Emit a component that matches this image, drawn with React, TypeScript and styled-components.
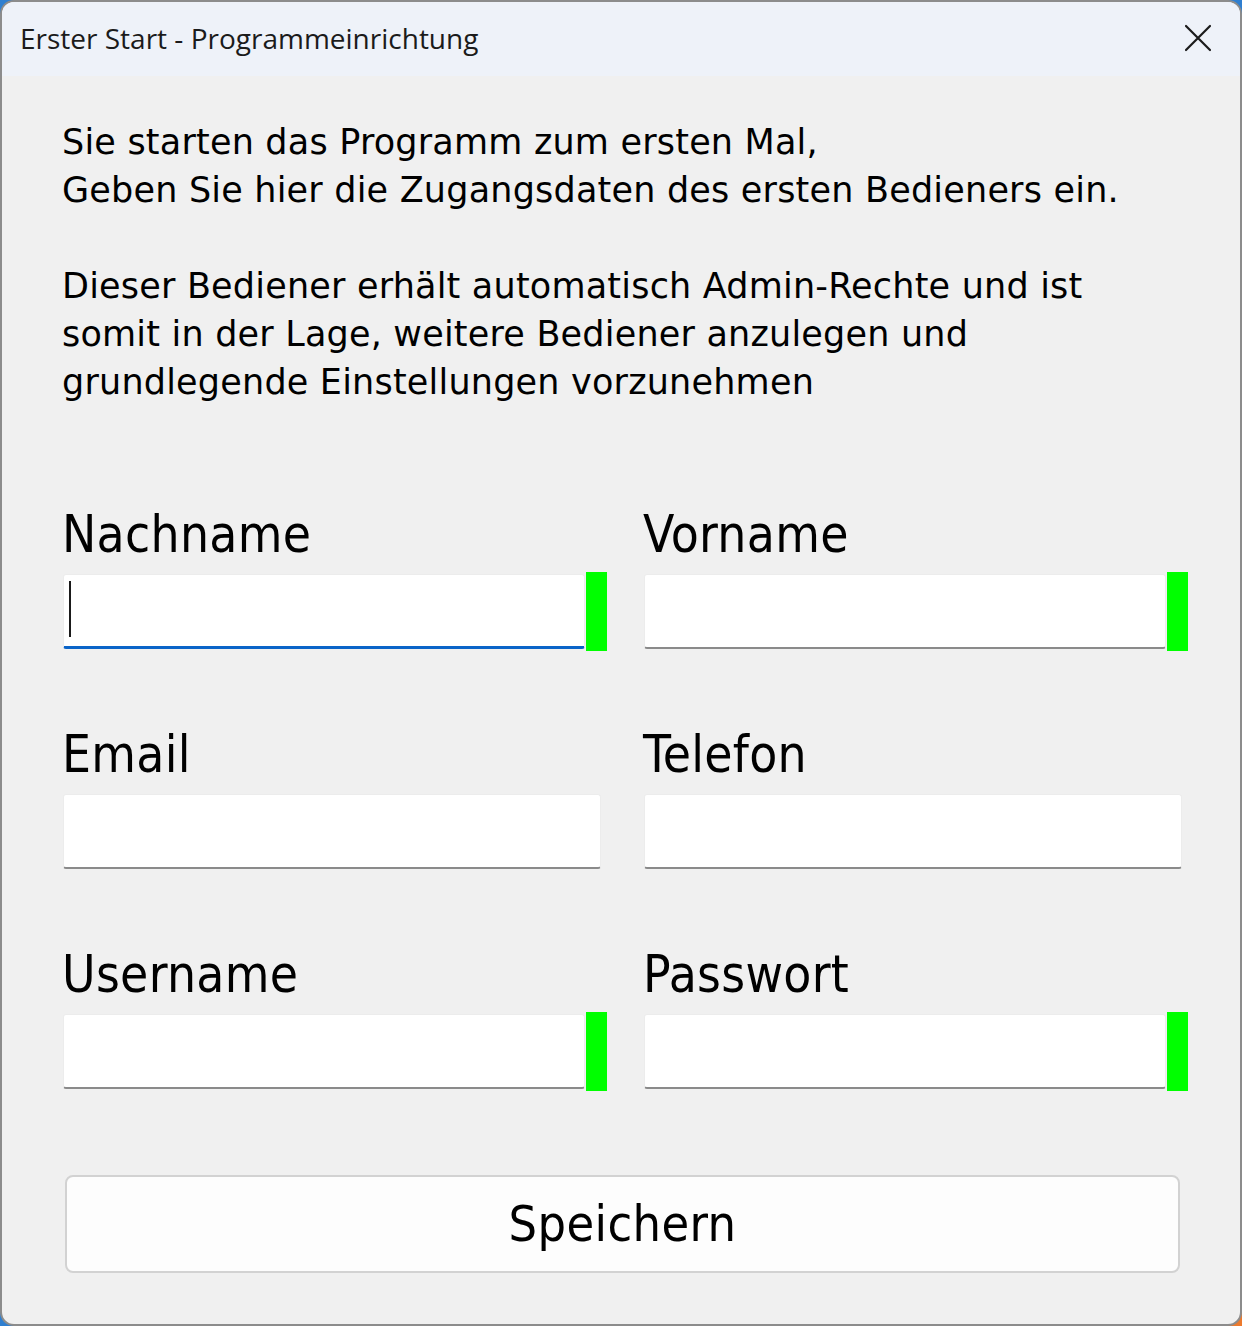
import React from "react";
import styled, { createGlobalStyle } from "styled-components";

const GlobalStyle = createGlobalStyle`
  html, body {
    margin: 0;
    padding: 0;
    width: 1242px;
    height: 1326px;
    overflow: hidden;
    background: linear-gradient(135deg, #2f7fd0 0%, #2f7fd0 92%, #f07a2a 100%);
  }
  #root { width: 1242px; height: 1326px; }
  * { box-sizing: border-box; }
`;

const Window = styled.div`
  width: 1242px;
  height: 1326px;
  border: 2px solid #8c8c8c;
  border-radius: 14px;
  overflow: hidden;
  background: #f0f0f0;
  display: flex;
  flex-direction: column;
  font-family: "DejaVu Sans Condensed", "DejaVu Sans", Verdana, sans-serif;
  color: #000;
`;

const TitleBar = styled.div`
  height: 74px;
  flex: none;
  background: #eef2f9;
  display: flex;
  align-items: center;
  justify-content: space-between;
  padding: 0 28px 0 18px;
`;

const Title = styled.div`
  font-family: "Open Sans", "Noto Sans", sans-serif;
  font-size: 28px;
  color: #1b1b1b;
  margin-top: -2px;
`;

const CloseButton = styled.div`
  width: 28px;
  height: 28px;
  display: flex;
  align-items: center;
  justify-content: center;
  margin-top: -2px;
`;

const Content = styled.div`
  padding: 42px 53px 0 60px;
  display: flex;
  flex-direction: column;
`;

const Intro = styled.p`
  margin: 0;
  font-family: "DejaVu Sans", Verdana, sans-serif;
  font-size: 35px;
  letter-spacing: 0.2px;
  line-height: 48px;
  white-space: pre-line;
`;

const FieldGrid = styled.div`
  margin-top: 99px;
  display: grid;
  grid-template-columns: 545px 545px;
  column-gap: 36px;
  row-gap: 76px;
`;

const Field = styled.div`
  display: flex;
  flex-direction: column;
`;

const Label = styled.label`
  font-size: 51px;
  letter-spacing: 0.3px;
  line-height: 60px;
  height: 60px;
  white-space: nowrap;
`;

const InputRow = styled.div`
  margin-top: 9px;
  height: 75px;
  display: flex;
  align-items: center;
`;

const TextBox = styled.div<{ $focused?: boolean; $short?: boolean }>`
  flex: ${(p) => (p.$short ? "none" : "1")};
  width: ${(p) => (p.$short ? "538px" : "auto")};
  height: 75px;
  margin-left: 1px;
  background: #ffffff;
  border: 1px solid #ececec;
  border-bottom: ${(p) => (p.$focused ? "3px solid #0a64c8" : "2px solid #8a8a8a")};
  border-radius: 3px;
  display: flex;
  align-items: center;
  padding-left: 5px;
`;

const Caret = styled.div`
  width: 2px;
  height: 56px;
  background: #1a1a1a;
  margin-top: -4px;
`;

const Marker = styled.div`
  width: 21px;
  height: 79px;
  margin-left: 1px;
  background: #00ff00;
  flex: none;
`;

const SaveButton = styled.button`
  margin: 86px 7px 0 3px;
  height: 98px;
  background: #fdfdfd;
  border: 2px solid #d2d2d2;
  border-radius: 8px;
  font-family: "DejaVu Sans Condensed", "DejaVu Sans", Verdana, sans-serif;
  font-size: 50px;
  letter-spacing: 0.4px;
  color: #000;
  cursor: pointer;
  padding: 0;
`;

type FieldDef = {
  label: string;
  marker: boolean;
  focused?: boolean;
};

const fields: FieldDef[] = [
  { label: "Nachname", marker: true, focused: true },
  { label: "Vorname", marker: true },
  { label: "Email", marker: false },
  { label: "Telefon", marker: false },
  { label: "Username", marker: true },
  { label: "Passwort", marker: true },
];

export default function App() {
  return (
    <>
      <GlobalStyle />
      <Window>
        <TitleBar>
          <Title>Erster Start - Programmeinrichtung</Title>
          <CloseButton>
            <svg width="28" height="28" viewBox="0 0 28 28">
              <path d="M2 2 L26 26 M26 2 L2 26" stroke="#1b1b1b" strokeWidth="2.2" strokeLinecap="round" />
            </svg>
          </CloseButton>
        </TitleBar>
        <Content>
          <Intro>
            {"Sie starten das Programm zum ersten Mal,\nGeben Sie hier die Zugangsdaten des ersten Bedieners ein.\n\nDieser Bediener erhält automatisch Admin-Rechte und ist\nsomit in der Lage, weitere Bediener anzulegen und\ngrundlegende Einstellungen vorzunehmen"}
          </Intro>
          <FieldGrid>
            {fields.map((f) => (
              <Field key={f.label}>
                <Label>{f.label}</Label>
                <InputRow>
                  <TextBox $focused={f.focused} $short={!f.marker}>
                    {f.focused && <Caret />}
                  </TextBox>
                  {f.marker && <Marker />}
                </InputRow>
              </Field>
            ))}
          </FieldGrid>
          <SaveButton>Speichern</SaveButton>
        </Content>
      </Window>
    </>
  );
}
